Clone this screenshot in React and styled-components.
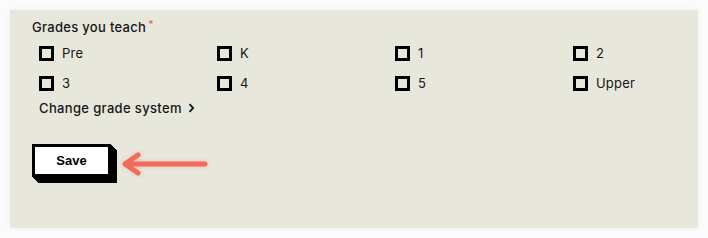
import React from 'react'
import styled, { createGlobalStyle } from 'styled-components'

const GlobalStyle = createGlobalStyle`
  html, body {
    margin: 0;
    background: #fbfbfb;
  }
  body {
    padding: 10px;
    font-family: Inter, 'Liberation Sans', sans-serif;
    color: #161616;
  }
`

const Panel = styled.div`
  width: 688px;
  height: 218px;
  box-sizing: border-box;
  background: #e8e7dc;
  box-shadow: 0 0 6px rgba(0, 0, 0, 0.06);
  padding: 9px 0 0 22px;
  overflow: hidden;
`

const Title = styled.div`
  font-size: 13px;
  font-weight: 500;
  line-height: 16px;
  letter-spacing: 0.3px;

  sup {
    color: #e26a5c;
    font-size: 10px;
    margin-left: 2px;
    vertical-align: 4px;
    line-height: 0;
  }
`

const Grid = styled.div`
  display: grid;
  grid-template-columns: 178px 178px 178px auto;
  row-gap: 15px;
  margin: 11px 0 0 7px;
`

const Option = styled.label`
  display: flex;
  align-items: center;
  gap: 8px;
  font-size: 13px;
  line-height: 15px;
  letter-spacing: 0.2px;
`

const Box = styled.span`
  display: block;
  flex: none;
  width: 15px;
  height: 15px;
  box-sizing: border-box;
  border: 3.5px solid #000;
  background: transparent;
`

const ChangeLink = styled.div`
  display: flex;
  align-items: center;
  gap: 6px;
  margin: 9px 0 0 7px;
  font-size: 13px;
  font-weight: 500;
  line-height: 16px;
  letter-spacing: 0.35px;
`

const ActionRow = styled.div`
  display: flex;
  align-items: center;
  margin-top: 27px;
`

const SaveButton = styled.button`
  flex: none;
  width: 79px;
  height: 33px;
  box-sizing: border-box;
  border: 3px solid #000;
  background: #fff;
  font-family: 'Liberation Sans', Arial, sans-serif;
  font-weight: 700;
  font-size: 13px;
  color: #000;
  padding: 0;
  box-shadow: 1px 1px 0 #000, 2px 2px 0 #000, 3px 3px 0 #000, 4px 4px 0 #000,
    5px 5px 0 #000, 6px 6px 0 #000;
`

const Arrow = styled.svg`
  margin: 8px 0 0 10px;
  filter: drop-shadow(0 0 2px rgba(242, 107, 91, 0.35));
`

const grades = ['Pre', 'K', '1', '2', '3', '4', '5', 'Upper']

export default function App() {
  return (
    <>
      <GlobalStyle />
      <Panel>
        <Title>
          Grades you teach<sup>*</sup>
        </Title>
        <Grid>
          {grades.map((g) => (
            <Option key={g}>
              <Box />
              {g}
            </Option>
          ))}
        </Grid>
        <ChangeLink>
          Change grade system
          <svg width="7" height="10" viewBox="0 0 7 10">
            <path d="M1.5 1.2 L5.2 5 L1.5 8.8" fill="none" stroke="#161616" strokeWidth="1.8" />
          </svg>
        </ChangeLink>
        <ActionRow>
          <SaveButton>Save</SaveButton>
          <Arrow width="90" height="26" viewBox="0 0 90 26">
            <path d="M5 13 L84 13" stroke="#f26a5a" strokeWidth="5" strokeLinecap="round" />
            <path d="M17 4 L4 13 L17 22" fill="none" stroke="#f26a5a" strokeWidth="5" strokeLinecap="round" strokeLinejoin="round" />
          </Arrow>
        </ActionRow>
      </Panel>
    </>
  )
}
